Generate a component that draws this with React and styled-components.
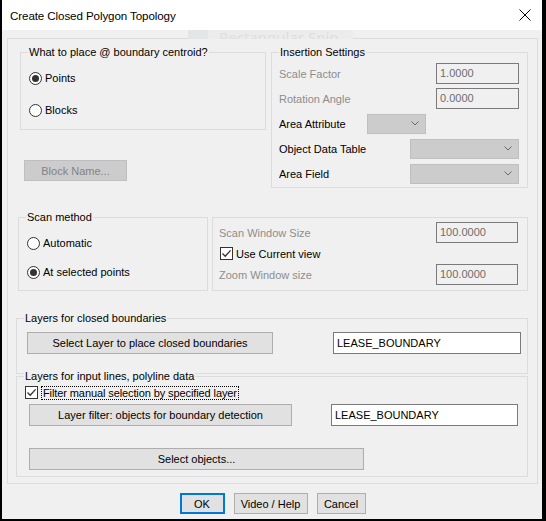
import React from "react";
import styled, { createGlobalStyle } from "styled-components";

const GlobalStyle = createGlobalStyle`
  html, body { margin: 0; padding: 0; background: #000; }
  body {
    font-family: "Liberation Sans", Arial, sans-serif;
    font-size: 11px;
    color: #000;
  }
  * { box-sizing: border-box; }
`;

const Screen = styled.div`
  width: 546px;
  height: 521px;
  padding: 0 4px 2px 2px;
  background: #000;
  display: flex;
  flex-direction: column;
  position: relative;
`;

const TitleBar = styled.div`
  height: 30px;
  flex: none;
  background: #fff;
  display: flex;
  align-items: center;
  justify-content: space-between;
  padding: 0 11px 0 8px;
  font-size: 11.6px;
`;

const TitleText = styled.span`
  letter-spacing: -0.1px;
`;

const CloseIcon = styled.svg`
  width: 12px;
  height: 12px;
  display: block;
`;

const SnipGhost = styled.div`
  position: absolute;
  top: 30px;
  left: 188px;
  width: 165px;
  height: 9px;
  overflow: hidden;
  background: #ececed;
  display: flex;
  align-items: flex-start;
  gap: 11px;
  color: #dedfe0;
  font-family: "Noto Sans", sans-serif;
  font-size: 15px;
  line-height: 9px;
  padding-top: 3px;
  pointer-events: none;
  &::before {
    content: "";
    width: 20px;
    height: 9px;
    margin-top: -3px;
    background: #e4e5e6;
    flex: none;
  }
`;

const Body = styled.div`
  flex: 1;
  background: #f0f0f0;
  padding: 8px 4px 0 5px;
  display: flex;
  flex-direction: column;
`;

const OuterFrame = styled.div`
  height: 446px;
  border: 1px solid #dcdcdc;
  display: flex;
  flex-direction: column;
`;

const Row = styled.div`
  display: flex;
  align-items: flex-start;
  margin-top: ${(p) => p.$top || 0}px;
  margin-left: ${(p) => p.$left || 0}px;
`;

const Column = styled.div`
  display: flex;
  flex-direction: column;
  width: ${(p) => p.$w}px;
  margin-left: ${(p) => p.$left || 0}px;
`;

const Group = styled.div`
  position: relative;
  flex: none;
  width: ${(p) => p.$w}px;
  height: ${(p) => p.$h}px;
  margin-left: ${(p) => p.$left || 0}px;
  border: 1px solid #dcdcdc;
  padding: ${(p) => p.$pad || "0"};
  display: flex;
  flex-direction: column;
  gap: ${(p) => p.$gap || 0}px;
`;

const Caption = styled.span`
  position: absolute;
  top: -7px;
  left: 7px;
  padding: 0 1px;
  line-height: 13px;
  background: #f0f0f0;
  white-space: nowrap;
`;

const OptionRow = styled.label`
  display: flex;
  align-items: center;
  gap: 3px;
  height: ${(p) => p.$h || 20}px;
  margin-left: ${(p) => p.$left || 0}px;
  white-space: nowrap;
`;

const RadioCircle = styled.span`
  width: 13px;
  height: 13px;
  flex: none;
  border: 1px solid #333;
  border-radius: 50%;
  background: #fff;
  display: flex;
  align-items: center;
  justify-content: center;
  &::after {
    content: "";
    width: 7px;
    height: 7px;
    border-radius: 50%;
    background: #333;
    display: ${(p) => (p.$checked ? "block" : "none")};
  }
`;

const CheckBox = styled.span`
  width: 13px;
  height: 13px;
  flex: none;
  border: 1px solid #333;
  background: #fff;
  display: flex;
  align-items: center;
  justify-content: center;
`;

const FocusText = styled.span`
  border: 1px dotted #000;
  padding: 0 1px;
  line-height: 12px;
  letter-spacing: -0.1px;
`;

const Button = styled.div`
  flex: none;
  width: ${(p) => p.$w}px;
  height: ${(p) => p.$h || 22}px;
  margin-left: ${(p) => p.$left || 0}px;
  margin-top: ${(p) => p.$top || 0}px;
  display: flex;
  align-items: center;
  justify-content: center;
  white-space: nowrap;
  background: ${(p) => (p.$disabled ? "#cccccc" : "#e1e1e1")};
  border: ${(p) =>
    p.$default ? "2px solid #0078d7" : p.$disabled ? "1px solid #bfbfbf" : "1px solid #adadad"};
  color: ${(p) => (p.$disabled ? "#838383" : "#000")};
`;

const TextBox = styled.div`
  flex: none;
  width: ${(p) => p.$w}px;
  height: ${(p) => p.$h || 21}px;
  margin-left: ${(p) => p.$left || 0}px;
  display: flex;
  align-items: center;
  padding: 0 3px 1px;
  border: 1px solid #7a7a7a;
  background: ${(p) => (p.$disabled ? "#f0f0f0" : "#fff")};
  color: ${(p) => (p.$disabled ? "#6d6d6d" : "#000")};
  white-space: nowrap;
`;

const Combo = styled.div`
  flex: none;
  width: ${(p) => p.$w}px;
  height: 20px;
  display: flex;
  align-items: center;
  justify-content: flex-end;
  padding-right: 6px;
  background: #cccccc;
  border: 1px solid #bfbfbf;
`;

const FieldRow = styled.div`
  display: flex;
  align-items: center;
  height: ${(p) => p.$h || 25}px;
  margin-top: ${(p) => p.$top || 0}px;
`;

const FieldLabel = styled.span`
  color: ${(p) => (p.$disabled ? "#8d8d8d" : "#000")};
  width: ${(p) => (p.$w ? `${p.$w}px` : "auto")};
  flex: ${(p) => (p.$w ? "none" : "1")};
  white-space: nowrap;
`;

const Footer = styled.div`
  display: flex;
  justify-content: center;
  gap: 9px;
  margin-top: 9px;
`;

const Chevron = () => (
  <svg width="8" height="5" viewBox="0 0 8 5">
    <path d="M0.5 0.5 L4 4 L7.5 0.5" fill="none" stroke="#6a6a6a" strokeWidth="1" />
  </svg>
);

const Check = () => (
  <svg width="11" height="11" viewBox="0 0 11 11">
    <path d="M1.5 5.5 L4.2 8.3 L9.6 2.4" fill="none" stroke="#333" strokeWidth="1.3" />
  </svg>
);

const Radio = ({ checked, label, h, left }) => (
  <OptionRow $h={h} $left={left}>
    <RadioCircle $checked={checked} />
    <span>{label}</span>
  </OptionRow>
);

export default function App() {
  return (
    <>
      <GlobalStyle />
      <Screen>
        <TitleBar>
          <TitleText>Create Closed Polygon Topology</TitleText>
          <CloseIcon viewBox="0 0 12 12">
            <path d="M0.5 0.5 L11.5 11.5 M11.5 0.5 L0.5 11.5" stroke="#000" strokeWidth="1" />
          </CloseIcon>
        </TitleBar>
        <SnipGhost>Rectangular Snip</SnipGhost>
        <Body>
          <OuterFrame>
            <Row $top={13} $left={12}>
              <Column $w={246}>
                <Group $w={246} $h={78} $pad="15px 0 0 8px" $gap={12}>
                  <Caption>What to place @ boundary centroid?</Caption>
                  <Radio checked label="Points" />
                  <Radio label="Blocks" />
                </Group>
                <Button $disabled $w={103} $h={21} $left={4} $top={30}>
                  Block Name...
                </Button>
              </Column>
              <Group $w={257} $h={136} $left={5} $pad="8px 8px 0 7px">
                <Caption>Insertion Settings</Caption>
                <FieldRow>
                  <FieldLabel $disabled>Scale Factor</FieldLabel>
                  <TextBox $disabled $w={83}>1.0000</TextBox>
                </FieldRow>
                <FieldRow>
                  <FieldLabel $disabled>Rotation Angle</FieldLabel>
                  <TextBox $disabled $w={83}>0.0000</TextBox>
                </FieldRow>
                <FieldRow>
                  <FieldLabel $w={88}>Area Attribute</FieldLabel>
                  <Combo $w={59}>
                    <Chevron />
                  </Combo>
                </FieldRow>
                <FieldRow>
                  <FieldLabel>Object Data Table</FieldLabel>
                  <Combo $w={109}>
                    <Chevron />
                  </Combo>
                </FieldRow>
                <FieldRow>
                  <FieldLabel>Area Field</FieldLabel>
                  <Combo $w={109}>
                    <Chevron />
                  </Combo>
                </FieldRow>
              </Group>
            </Row>

            <Row $top={29} $left={10}>
              <Group $w={190} $h={74} $pad="15px 0 0 8px" $gap={9}>
                <Caption>Scan method</Caption>
                <Radio label="Automatic" />
                <Radio checked label="At selected points" />
              </Group>
              <Group $w={316} $h={74} $left={4} $pad="4px 9px 0 6px">
                <FieldRow $h={21}>
                  <FieldLabel $disabled>Scan Window Size</FieldLabel>
                  <TextBox $disabled $w={82}>100.0000</TextBox>
                </FieldRow>
                <FieldRow $h={21}>
                  <OptionRow $h={21} $left={1}>
                    <CheckBox>
                      <Check />
                    </CheckBox>
                    <span>Use Current view</span>
                  </OptionRow>
                </FieldRow>
                <FieldRow $h={21}>
                  <FieldLabel $disabled>Zoom Window size</FieldLabel>
                  <TextBox $disabled $w={82}>100.0000</TextBox>
                </FieldRow>
              </Group>
            </Row>

            <Row $top={27} $left={8}>
              <Group $w={512} $h={56} $pad="13px 0 0 10px">
                <Caption>Layers for closed boundaries</Caption>
                <FieldRow $h={22}>
                  <Button $w={246}>Select Layer to place closed boundaries</Button>
                  <TextBox $w={188} $h={22} $left={60}>LEASE_BOUNDARY</TextBox>
                </FieldRow>
              </Group>
            </Row>

            <Row $top={2} $left={8}>
              <Group $w={512} $h={101} $pad="9px 0 0 8px">
                <Caption>Layers for input lines, polyline data</Caption>
                <OptionRow $h={13}>
                  <CheckBox>
                    <Check />
                  </CheckBox>
                  <FocusText>Filter manual selection by specified layer</FocusText>
                </OptionRow>
                <FieldRow $h={22} $top={5}>
                  <Button $w={263} $left={4}>
                    Layer filter: objects for boundary detection
                  </Button>
                  <TextBox $w={187} $h={22} $left={39}>LEASE_BOUNDARY</TextBox>
                </FieldRow>
                <Button $w={335} $left={4} $top={22}>
                  Select objects...
                </Button>
              </Group>
            </Row>
          </OuterFrame>
          <Footer>
            <Button $default $w={45} $h={21}>OK</Button>
            <Button $w={74} $h={21}>Video / Help</Button>
            <Button $w={49} $h={21}>Cancel</Button>
          </Footer>
        </Body>
      </Screen>
    </>
  );
}
